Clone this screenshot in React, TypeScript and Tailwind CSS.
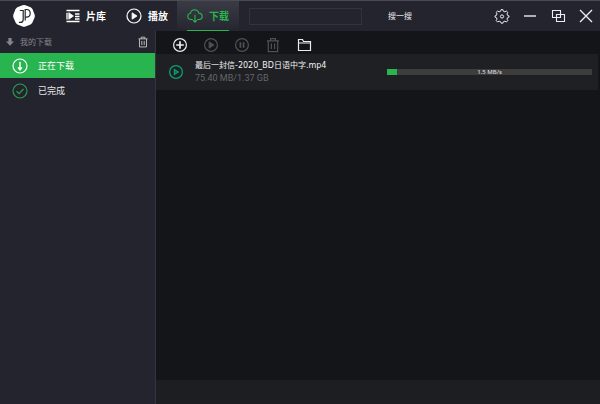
import type { ReactNode } from 'react';

type IconProps = { className?: string; children: ReactNode; box?: number };

function Icon({ className = '', children, box = 16 }: IconProps) {
  return (
    <svg
      viewBox={`0 0 ${box} ${box}`}
      fill="none"
      stroke="currentColor"
      aria-hidden="true"
      className={`block shrink-0 ${className}`}
    >
      {children}
    </svg>
  );
}

function Logo() {
  return (
    <Icon box={24} className="size-6 text-[#24242e]">
      <path
        d="M10.5 1.2Q12 .8 13.5 1.2L18.6 3.2Q20 4 20.5 5.2L22.6 10.4Q23 12 22.6 13.5L20.4 18.6Q19.8 19.8 18.6 20.4L13.5 22.5Q12 23 10.5 22.5L5.4 20.4Q4.2 19.8 3.6 18.6L1.4 13.5Q1 12 1.4 10.4L3.5 5.2Q4 4 5.4 3.2Z"
        fill="#ffffff"
        stroke="none"
      />
      <path d="M7.8 6.5h3.4v8.9q0 3-2.8 3H6.9" strokeWidth="1.2" />
      <path d="M13.2 16.5v-11h1.2q3.8 0 3.8 3.8t-3.8 3.8h-1.2" strokeWidth="1.2" />
    </Icon>
  );
}

function LibraryIcon() {
  return (
    <Icon box={14} className="size-3.5">
      <path d="M.5 1.5h13M.5 12.5h13M9 5h4.5M9 7.5h4.5M9 10h4.5M1 3.8v6.8" strokeWidth="1.3" />
      <path d="M2.8 3.7 7.4 7l-4.6 3.3Z" fill="currentColor" strokeWidth=".8" />
    </Icon>
  );
}

function PlayIcon({ radius = 7 }: { radius?: number }) {
  return (
    <Icon className="size-4">
      <circle cx="8" cy="8" r={radius} strokeWidth="1.2" />
      <path d="M6.1 4.8 11 8l-4.9 3.2Z" fill="currentColor" strokeWidth=".8" />
    </Icon>
  );
}

function PlayOutlineIcon() {
  return (
    <Icon className="size-4 text-[#0f9d76]">
      <circle cx="8" cy="8" r="6.4" strokeWidth="1.3" />
      <path d="M6.4 5.6 10.3 8l-3.9 2.4Z" fill="currentColor" fillOpacity=".5" strokeWidth="1.2" />
    </Icon>
  );
}

function CloudIcon() {
  return (
    <Icon className="size-4">
      <path
        d="M5.7 11.5H4Q.8 11.3.8 8.3.8 5.6 3.5 5.2 4.2 2 7.5 1.8q3.4 0 4.3 3.3 3.4.3 3.4 3.3 0 2.9-3.1 3.1h-1.8"
        strokeWidth="1.1"
      />
      <path d="M8 6.8v7.4M6 12.2l2 2.1 2-2.1" strokeWidth="1.1" />
    </Icon>
  );
}

function TrashIcon({ className = '' }: { className?: string }) {
  return (
    <Icon className={className}>
      <path d="M2 3.8h12M5.6 3.8V1.6h4.8v2.2M3.3 4v10.6h9.4V4M6.4 6.6v5.4M9.6 6.6v5.4" strokeWidth="1.2" />
    </Icon>
  );
}

function PlusIcon() {
  return (
    <Icon className="size-4">
      <circle cx="8" cy="8" r="6.4" strokeWidth="1.2" />
      <path d="M8 4.2v7.6M4.2 8h7.6" strokeWidth="1.7" />
    </Icon>
  );
}

function PauseIcon() {
  return (
    <Icon className="size-4">
      <circle cx="8" cy="8" r="6.4" strokeWidth="1.2" />
      <path d="M6.4 5.2v5.6M9.6 5.2v5.6" strokeWidth="1.7" />
    </Icon>
  );
}

function FolderIcon() {
  return (
    <Icon className="size-4">
      <path d="M2.5 13.5v-11h4l1 2h7v9ZM2.5 6h12" strokeWidth="1.2" />
    </Icon>
  );
}

function GearIcon() {
  return (
    <Icon className="size-4">
      <path
        d="M8.9 1.6 9.3 3.2 10.9 3.8 12.4 3 13.8 4.4 13 5.9 13.6 7.4 15 7.9V9.1L13.6 9.6 13 11.1 13.8 12.6 12.4 14 10.9 13.2 9.3 13.8 8.9 15.2H7.1L6.7 13.8 5.1 13.2 3.6 14 2.2 12.6 3 11.1 2.4 9.6 1 9.1V7.9L2.4 7.4 3 5.9 2.2 4.4 3.6 3 5.1 3.8 6.7 3.2 7.1 1.6Z"
        strokeWidth="1"
        strokeLinejoin="round"
      />
      <circle cx="8" cy="8.5" r="1.6" strokeWidth="1" />
    </Icon>
  );
}

function RestoreIcon() {
  return (
    <Icon className="size-4">
      <path d="M2.5 2.5h8v7h-8ZM6.5 6.5h8v7h-8Z" strokeWidth="1.1" />
    </Icon>
  );
}

function DownloadCircleIcon() {
  return (
    <Icon className="size-4 text-white">
      <circle cx="8" cy="8" r="7" strokeWidth="1.2" />
      <path d="M8 3.8v7.4M6 9.4l2 2.4 2-2.4" strokeWidth="1.4" />
    </Icon>
  );
}

function CheckCircleIcon() {
  return (
    <Icon className="size-4 text-[#27a34c]">
      <circle cx="8" cy="8" r="7" strokeWidth="1.1" />
      <path d="m4.5 8.2 2.6 2.4 4.4-4.6" strokeWidth="1.2" />
    </Icon>
  );
}

function Tab({ icon, label, active = false }: { icon: ReactNode; label: string; active?: boolean }) {
  return (
    <button
      type="button"
      aria-current={active ? 'page' : undefined}
      className={`flex h-full items-center text-[10px] leading-4 font-bold ${
        active
          ? 'justify-center bg-linear-to-b from-[#3b3b46] to-[#262630] px-2.5 text-[#27b550]'
          : 'text-white'
      }`}
    >
      <span className={`flex h-full items-center gap-1.5 border-b ${active ? 'border-[#27b550]' : 'border-transparent'}`}>
        {icon}
        {label}
      </span>
    </button>
  );
}

function IconButton({ label, children, disabled = false }: { label: string; children: ReactNode; disabled?: boolean }) {
  return (
    <button type="button" aria-label={label} disabled={disabled} className="text-[#ececee] disabled:text-[#515154]">
      {children}
    </button>
  );
}

function SideItem({ icon, label, active = false }: { icon: ReactNode; label: string; active?: boolean }) {
  return (
    <button
      type="button"
      className={`flex h-[25px] w-full items-center gap-2.5 pl-3 text-[9px] leading-4 ${
        active ? 'bg-[#28b550] text-white' : 'text-[#e4e4e6]'
      }`}
    >
      {icon}
      {label}
    </button>
  );
}

export default function App() {
  return (
    <div className="flex min-h-screen flex-col bg-[#24242e] font-['Noto_Sans','Noto_Sans_CJK_SC',sans-serif]">
      <header className="flex h-[31px] items-center border-t border-[#4a4a53] pl-3 text-white">
        <Logo />
        <nav className="ml-[30px] flex h-full items-center gap-5">
          <Tab icon={<LibraryIcon />} label="片库" />
          <Tab icon={<PlayIcon />} label="播放" />
        </nav>
        <div className="ml-[9px] h-full">
          <Tab icon={<CloudIcon />} label="下载" active />
        </div>
        <form className="ml-2.5 flex items-center" onSubmit={(e) => e.preventDefault()}>
          <input
            type="text"
            aria-label="搜一搜"
            className="h-[17px] w-[113px] border border-[#33333c] bg-transparent px-1 text-[9px] outline-none"
          />
          <button type="submit" className="ml-[26px] text-[8px] leading-4 font-medium text-[#d0d0d4]">
            搜一搜
          </button>
        </form>
        <div className="ml-auto flex items-center gap-3 pr-1.5">
          <IconButton label="设置">
            <GearIcon />
          </IconButton>
          <IconButton label="最小化">
            <Icon className="size-4">
              <path d="M2 8h12" strokeWidth="1.4" />
            </Icon>
          </IconButton>
          <IconButton label="还原">
            <RestoreIcon />
          </IconButton>
          <IconButton label="关闭">
            <Icon className="size-4">
              <path d="m2 2 12 12M14 2 2 14" strokeWidth="1.4" />
            </Icon>
          </IconButton>
        </div>
      </header>

      <div className="flex flex-1">
        <aside className="w-[156px] shrink-0 border-r border-[#34343e]">
          <div className="flex h-[22px] items-center gap-1.5 px-1.5 text-[8px] leading-4 text-[#85858b]">
            <Icon box={8} className="size-2">
              <path d="M2.4 0h3.2v3.4H8L4 7.8 0 3.4h2.4Z" fill="currentColor" stroke="none" />
            </Icon>
            <h2>我的下载</h2>
            <button type="button" aria-label="清空" className="ml-auto text-[#c8c8cc]">
              <TrashIcon className="size-3" />
            </button>
          </div>
          <SideItem icon={<DownloadCircleIcon />} label="正在下载" active />
          <SideItem icon={<CheckCircleIcon />} label="已完成" />
        </aside>

        <main className="flex min-w-0 flex-1 flex-col bg-[#141518]">
          <div className="flex h-[23px] items-center gap-[15px] pt-1 pl-4">
            <IconButton label="新建">
              <PlusIcon />
            </IconButton>
            <IconButton label="开始" disabled>
              <PlayIcon radius={6.4} />
            </IconButton>
            <IconButton label="暂停" disabled>
              <PauseIcon />
            </IconButton>
            <IconButton label="删除" disabled>
              <TrashIcon className="size-4" />
            </IconButton>
            <IconButton label="打开文件夹">
              <FolderIcon />
            </IconButton>
          </div>

          <div className="mr-0.5 flex h-9 items-center bg-[#1f2024] pr-1.5 pl-3">
            <button type="button" aria-label="播放">
              <PlayOutlineIcon />
            </button>
            <div className="ml-[11px] w-48">
              <p className="font-['DejaVu_Sans','Noto_Sans_CJK_SC',sans-serif] text-[8px] leading-3 whitespace-nowrap text-[#f0f0f0]">
                最后一封信-2020_BD日语中字.mp4
              </p>
              <p className="font-['Roboto',sans-serif] text-[9px] leading-3 text-[#65666a]">75.40 MB/1.37 GB</p>
            </div>
            <div
              role="progressbar"
              aria-label="下载进度"
              aria-valuenow={5}
              aria-valuemin={0}
              aria-valuemax={100}
              className="grid h-1.5 flex-1 items-center bg-[#3d3d3e]"
            >
              <div className="col-start-1 row-start-1 h-1.5 w-[5%] bg-[#28b550]" />
              <span className="col-start-1 row-start-1 text-center text-[6px] leading-1.5 font-medium text-[#dcdcdc]">
                1.5 MB/s
              </span>
            </div>
          </div>

          <footer className="mt-auto h-6 bg-[#1d1e22]" />
        </main>
      </div>
    </div>
  );
}
